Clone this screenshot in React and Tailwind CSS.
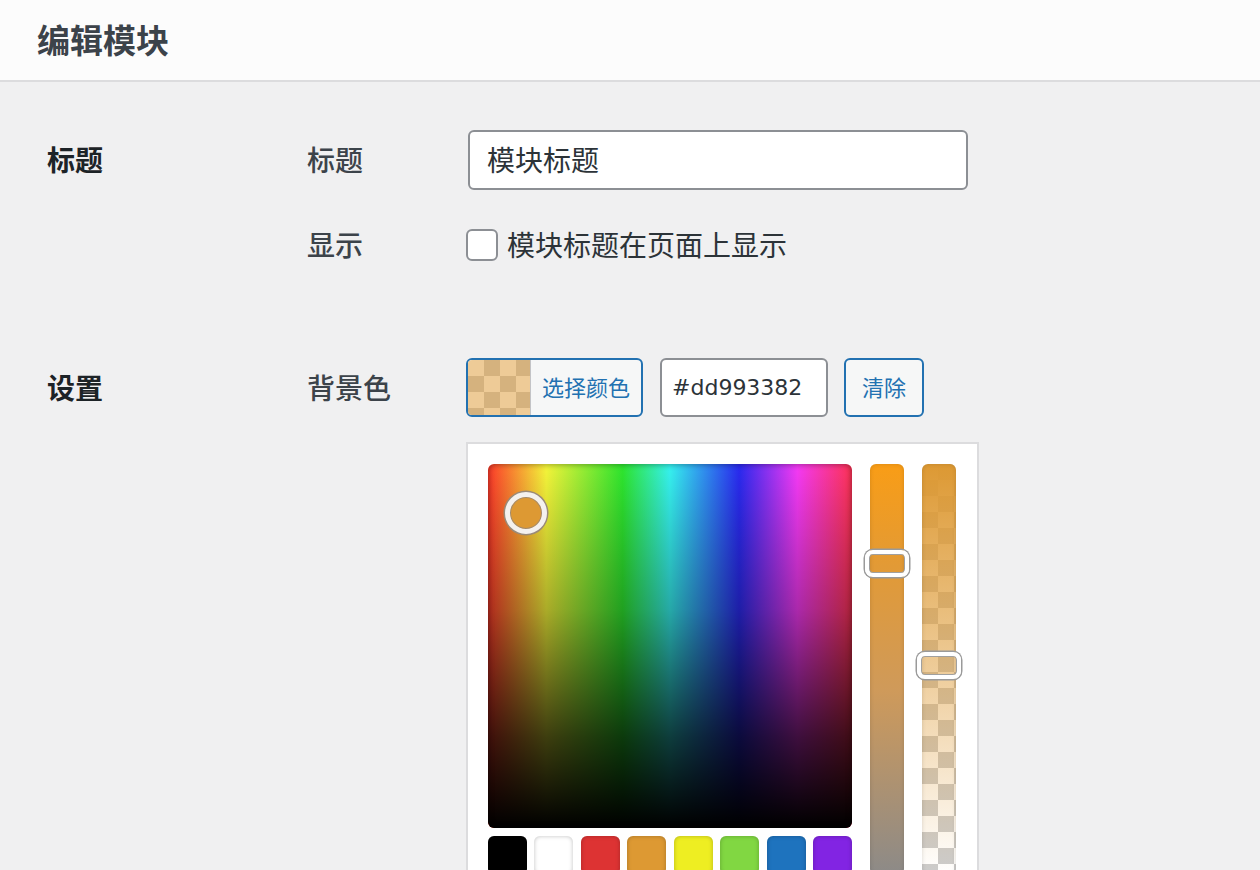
const checker =
  "bg-[repeating-conic-gradient(#cccccc_0%_25%,#ffffff_0%_50%)] bg-[length:32px_32px]";

const swatches = [
  "bg-[#000000]",
  "bg-[#ffffff]",
  "bg-[#dd3333]",
  "bg-[#dd9933]",
  "bg-[#eeee22]",
  "bg-[#81d742]",
  "bg-[#1e73be]",
  "bg-[#8224e3]",
];

function SliderHandle() {
  return (
    <div className="absolute -left-[5px] -right-[5px] h-[27px] rounded-[8px] border-[4px] border-white shadow-[0_0_0_1.5px_#9a9a9a,inset_0_0_0_1px_#a0a0a0]" />
  );
}

function ColorPicker() {
  return (
    <div className="w-[513px] border-2 border-[#dcdcde] bg-white pl-[20px] pt-[20px] pb-[20px]">
      <div className="flex gap-[18px]">
        <div className="flex w-[364px] flex-col gap-[8px]">
          {/* saturation / hue square */}
          <div className="relative h-[364px] w-[364px] overflow-hidden rounded-[6px] bg-[linear-gradient(to_right,#ff3a2a,#f5f53a_16%,#2ee62e_37%,#36f2f0_50%,#2a2af0_69%,#f53af5_85%,#ff3355)]">
            <div className="absolute inset-0 bg-[linear-gradient(to_bottom,rgba(0,0,0,0)_0%,rgba(0,0,0,0.3)_40%,rgba(0,0,0,0.75)_75%,#000000_100%)]" />
            <div className="absolute inset-0 rounded-[6px] shadow-[inset_0_0_6px_rgba(0,0,0,0.45)]" />
            <div className="absolute left-[17px] top-[28px] h-[42px] w-[42px] rounded-full border-[5px] border-[#f4f1ee] bg-[#dd9933] shadow-[0_0_0_1.5px_#9a8a78,inset_0_0_0_1px_#a08a70]" />
          </div>
          {/* palette */}
          <div className="flex justify-between">
            {swatches.map((c, i) => (
              <div
                key={i}
                className={`h-[39px] w-[39px] rounded-[6px] shadow-[inset_0_0_4px_rgba(0,0,0,0.25)] ${c}`}
              />
            ))}
          </div>
        </div>
        {/* saturation slider */}
        <div className="relative h-[411px] w-[34px] rounded-[6px] bg-[linear-gradient(to_bottom,#f99d16_0%,#e29a36_25%,#cf9a5a_55%,#8c8a88_100%)] shadow-[inset_0_0_4px_rgba(0,0,0,0.15)]">
          <div className="absolute top-[86px] w-full">
            <SliderHandle />
          </div>
        </div>
        {/* alpha slider */}
        <div className={`relative h-[411px] w-[34px] rounded-[6px] ${checker}`}>
          <div className="absolute inset-0 rounded-[6px] bg-[linear-gradient(to_bottom,#dd9933_0%,rgba(221,153,51,0.6)_40%,rgba(221,153,51,0)_100%)] shadow-[inset_0_0_4px_rgba(0,0,0,0.15)]" />
          <div className="absolute top-[188px] w-full">
            <SliderHandle />
          </div>
        </div>
      </div>
    </div>
  );
}

export default function App() {
  return (
    <div className="min-h-screen w-full bg-[#f0f0f1] font-['Noto_Sans','Noto_Sans_CJK_SC',sans-serif] text-[#3c434a]">
      {/* header */}
      <header className="flex h-[82px] items-center border-b-2 border-[#dcdcde] bg-[#fcfcfc] pl-[37px]">
        <h1 className="text-[33px] font-bold leading-none text-[#3c434a]">编辑模块</h1>
      </header>

      <main className="pl-[47px] pt-[48px]">
        {/* 标题 section */}
        <section className="flex">
          <div className="flex h-[60px] w-[260px] items-center text-[28px] font-bold leading-none text-[#1d2327]">标题</div>
          <div className="flex flex-col gap-[39px]">
            <div className="flex items-center">
              <div className="w-[161px] text-[28px] font-medium leading-none">标题</div>
              <div className="flex h-[60px] w-[500px] items-center rounded-[6px] border-2 border-[#8c8f94] bg-white px-[17px] text-[28px] leading-none text-[#2c3338]">
                模块标题
              </div>
            </div>
            <div className="flex h-[32px] items-center">
              <div className="w-[159px] text-[28px] font-medium leading-none">显示</div>
              <label className="flex items-center gap-[9px] text-[28px] leading-none text-[#2c3338]">
                <span className="h-[32px] w-[32px] rounded-[6px] border-2 border-[#8c8f94] bg-white" />
                模块标题在页面上显示
              </label>
            </div>
          </div>
        </section>

        {/* 设置 section */}
        <section className="mt-[97px] flex">
          <div className="flex h-[59px] w-[260px] items-center text-[28px] font-bold leading-none text-[#1d2327]">设置</div>
          <div className="flex">
            <div className="flex h-[59px] w-[159px] items-center text-[28px] font-medium leading-none">背景色</div>
            <div className="flex flex-col gap-[25px]">
              <div className="flex items-center">
                <button className="flex h-[59px] overflow-hidden rounded-[6px] border-2 border-[#2271b1] bg-[#f6f7f7]">
                  <span className={`relative h-full w-[62px] ${checker}`}>
                    <span className="absolute inset-0 bg-[#dd993382]" />
                  </span>
                  <span className="flex h-full items-center border-l border-[#c3c4c7] px-[11px] text-[22px] text-[#2271b1]">
                    选择颜色
                  </span>
                </button>
                <div className="ml-[17px] flex h-[59px] w-[168px] items-center rounded-[6px] border-2 border-[#8c8f94] bg-white px-[10px] font-['DejaVu_Sans',sans-serif] text-[22px] text-[#2c3338]">
                  #dd993382
                </div>
                <button className="ml-[16px] flex h-[59px] w-[80px] items-center justify-center rounded-[6px] border-2 border-[#2271b1] bg-[#f6f7f7] text-[22px] text-[#2271b1]">
                  清除
                </button>
              </div>
              <ColorPicker />
            </div>
          </div>
        </section>
      </main>
    </div>
  );
}
